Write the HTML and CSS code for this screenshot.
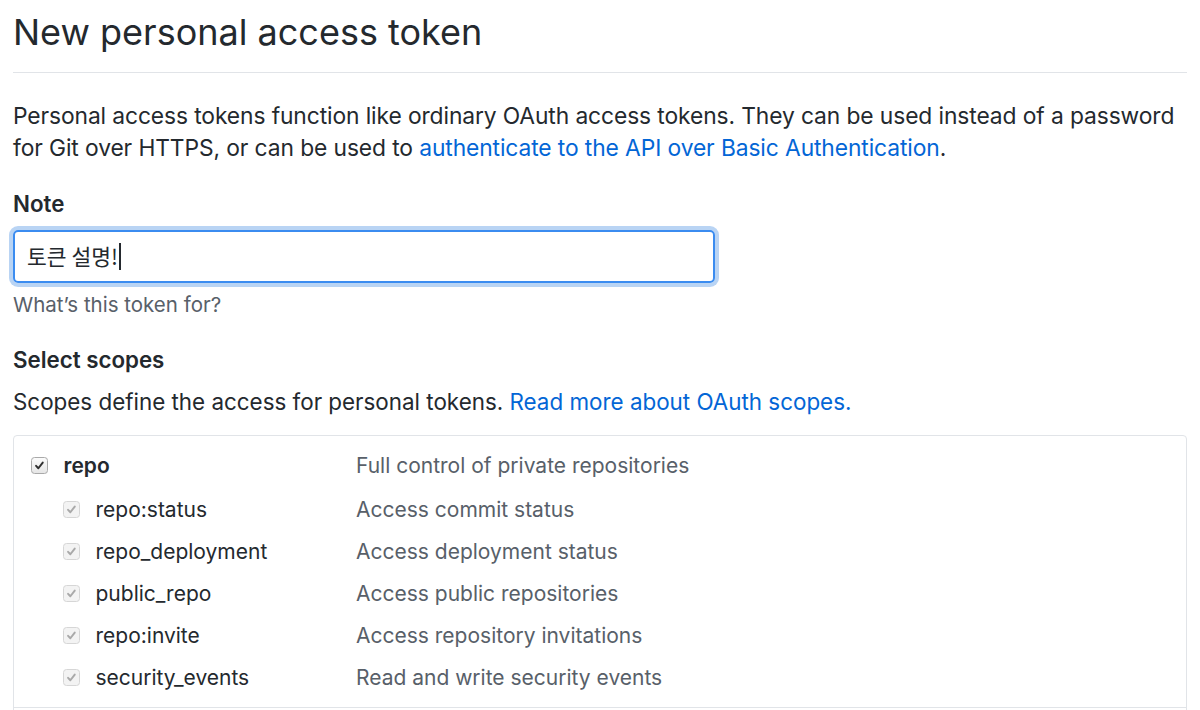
FILE: index.html
```html
<!DOCTYPE html>
<html>
<head>
<meta charset="utf-8">
<link rel="stylesheet" href="styles.css">
</head>
<body>
<div class="page">
  <h1 class="title">New personal access token</h1>
  <p class="intro">Personal access tokens function like ordinary OAuth access tokens. They can be used instead of a password for Git over HTTPS, or can be used to <a href="#">authenticate to the API over Basic Authentication</a>.</p>

  <div class="field">
    <label class="label">Note</label>
    <div class="input"><span class="input-text">토큰 설명!</span><span class="caret"></span></div>
    <p class="note">What’s this token for?</p>
  </div>

  <div class="field scopes">
    <h3 class="label">Select scopes</h3>
    <p class="desc">Scopes define the access for personal tokens. <a href="#">Read more about OAuth scopes.</a></p>
  </div>

  <div class="scope-box">
    <div class="scope-group">
      <div class="row parent">
        <span class="name"><span class="cb"><svg viewBox="0 0 16 16"><path d="M3.8 8.4 L6.6 11.4 L12 4.4" fill="none" stroke="#2f2f2f" stroke-width="2.4" stroke-linecap="round" stroke-linejoin="round"/></svg></span><b>repo</b></span>
        <span class="text">Full control of private repositories</span>
      </div>
      <div class="row child">
        <span class="name"><span class="cb dim"><svg viewBox="0 0 16 16"><path d="M3.8 8.4 L6.6 11.4 L12 4.4" fill="none" stroke="#a9a9a9" stroke-width="2.4" stroke-linecap="round" stroke-linejoin="round"/></svg></span>repo:status</span>
        <span class="text">Access commit status</span>
      </div>
      <div class="row child">
        <span class="name"><span class="cb dim"><svg viewBox="0 0 16 16"><path d="M3.8 8.4 L6.6 11.4 L12 4.4" fill="none" stroke="#a9a9a9" stroke-width="2.4" stroke-linecap="round" stroke-linejoin="round"/></svg></span>repo_deployment</span>
        <span class="text">Access deployment status</span>
      </div>
      <div class="row child">
        <span class="name"><span class="cb dim"><svg viewBox="0 0 16 16"><path d="M3.8 8.4 L6.6 11.4 L12 4.4" fill="none" stroke="#a9a9a9" stroke-width="2.4" stroke-linecap="round" stroke-linejoin="round"/></svg></span>public_repo</span>
        <span class="text">Access public repositories</span>
      </div>
      <div class="row child">
        <span class="name"><span class="cb dim"><svg viewBox="0 0 16 16"><path d="M3.8 8.4 L6.6 11.4 L12 4.4" fill="none" stroke="#a9a9a9" stroke-width="2.4" stroke-linecap="round" stroke-linejoin="round"/></svg></span>repo:invite</span>
        <span class="text">Access repository invitations</span>
      </div>
      <div class="row child">
        <span class="name"><span class="cb dim"><svg viewBox="0 0 16 16"><path d="M3.8 8.4 L6.6 11.4 L12 4.4" fill="none" stroke="#a9a9a9" stroke-width="2.4" stroke-linecap="round" stroke-linejoin="round"/></svg></span>security_events</span>
        <span class="text">Read and write security events</span>
      </div>
    </div>
    <div class="scope-group">
      <div class="row parent">
        <span class="name"><span class="cb"></span><b>admin:repo_hook</b></span>
        <span class="text">Full control of repository hooks</span>
      </div>
    </div>
  </div>
</div>
</body>
</html>
```
FILE: styles.css
```css
* { box-sizing: border-box; }
html, body { margin: 0; padding: 0; background: #fff; }
body {
  font-family: Inter, "Noto Sans CJK KR", sans-serif;
  color: #24292e;
  font-size: 21px;
  line-height: 1.5;
  overflow: hidden;
  height: 710px;
}
.page { padding: 0 13px; }
.title {
  margin: 0;
  padding: 10px 0 17px;
  font-size: 36px;
  font-weight: 400;
  line-height: 45px;
  border-bottom: 1.5px solid #e1e4e8;
}
.intro {
  margin: 27px 0 0;
  font-size: 22.8px;
  line-height: 32px;
  letter-spacing: -0.1px;
}
a { color: #0366d6; text-decoration: none; }
.field { margin-top: 24px; }
.label {
  display: block;
  margin: 0;
  font-size: 22.3px;
  font-weight: 600;
  line-height: 32px;
}
.input {
  margin-top: 10px;
  width: 702px;
  height: 53px;
  border: 2px solid #3b8cf0;
  border-radius: 5px;
  box-shadow: 0 0 0 4px rgba(3, 102, 214, 0.28);
  display: flex;
  align-items: center;
  padding: 0 12px;
  font-family: "Noto Sans CJK KR", Inter, sans-serif;
  font-size: 21.5px;
}
.caret { display: inline-block; width: 2px; height: 27px; background: #24292e; margin-left: 1px; }
.note {
  margin: 8px 0 0;
  font-size: 20.5px;
  line-height: 28px;
  color: #586069;
}
.scopes { margin-top: 25px; }
.desc {
  margin: 10px 0 0;
  font-size: 22.4px;
  line-height: 32px;
}
.scope-box {
  margin-top: 17px;
  border: 1.5px solid #e1e4e8;
  border-radius: 4px;
}
.scope-group { padding: 8.5px 0 8px; border-bottom: 1.5px solid #e1e4e8; }
.row { display: flex; align-items: center; height: 42px; }
.row.parent { margin-bottom: 2px; }
.name { display: flex; align-items: center; width: 342px; flex-shrink: 0; }
.parent .name { padding-left: 16.5px; }
.child .name { padding-left: 48.5px; }
.name b { font-weight: 600; }
.cb {
  width: 17px; height: 17px;
  border: 1px solid #a9a9a9;
  border-radius: 3.5px;
  background: linear-gradient(#fbfbfb, #e6e6e6);
  margin-right: 16px;
  display: inline-flex;
  align-items: center;
  justify-content: center;
  flex-shrink: 0;
}
.cb svg { width: 13px; height: 13px; }
.cb.dim { border-color: #d6d6d6; background: #f3f3f3; }
.child .cb { margin-right: 16px; }
.text { color: #586069; }
```
